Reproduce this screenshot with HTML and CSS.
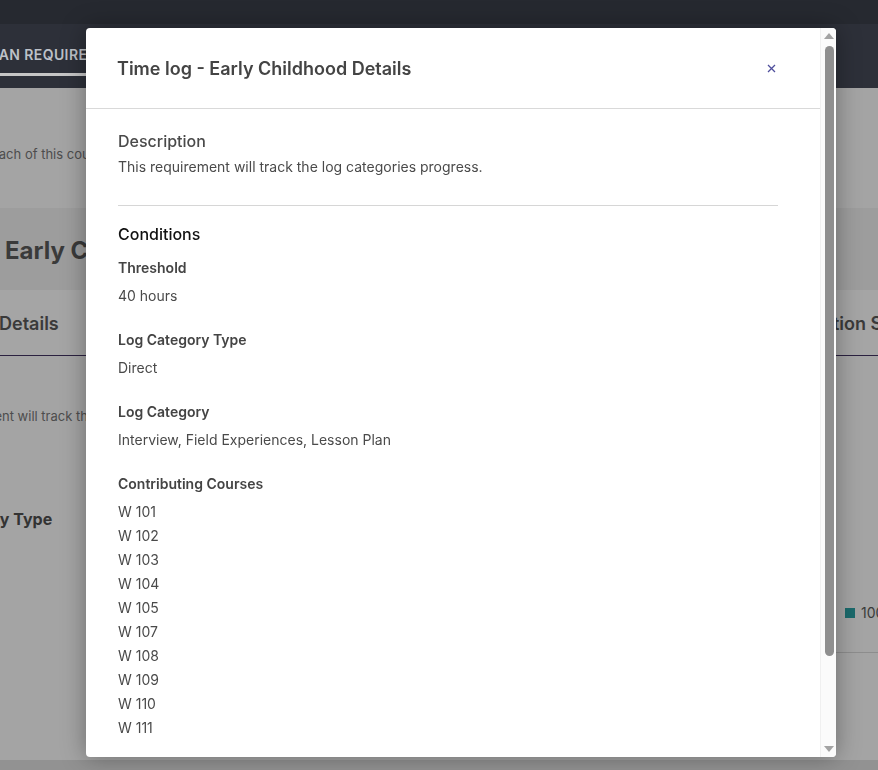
FILE: index.html
```html
<!DOCTYPE html>
<html lang="en">
   <head>
      <title>Time log - Early Childhood Details</title>
      <meta charset="UTF-8">
      <meta name="viewport" content="width=device-width, initial-scale=1.0">
      <link rel="stylesheet" href="styles.css">
   </head>
   <body>
      <div class="page">
         <div class="topbar"></div>
         <nav class="navbar">
            <span class="nav-item">Plan Requirements</span>
         </nav>
         <div class="intro">
            <p class="intro-text">Each of this course requirements</p>
         </div>
         <div class="title-band">
            <h1 class="page-title">Early Childhood</h1>
         </div>
         <div class="tabs">
            <span class="tab tab-left">Details</span>
            <span class="tab tab-right">Completion Status</span>
         </div>
         <div class="columns">
            <div class="col-left">
               <p class="bg-text">This requirement will track the log categories progress.</p>
               <p class="bg-label">Log Category Type</p>
            </div>
            <div class="col-right">
               <div class="legend"><span class="swatch"></span>100%</div>
               <div class="legend-rule"></div>
            </div>
         </div>
         <div class="footer-band"></div>
      </div>

      <div class="modal">
         <div class="modal-main">
            <header class="modal-header">
               <h2 class="modal-title">Time log - Early Childhood Details</h2>
               <button class="modal-close" aria-label="Close">
                  <svg width="9" height="9" viewBox="0 0 9 9">
                     <path d="M1 1 L8 8 M8 1 L1 8" stroke="#4f4f9c" stroke-width="1.3" fill="none"/>
                  </svg>
               </button>
            </header>
            <div class="modal-body">
               <h3 class="section-title">Description</h3>
               <p class="desc">This requirement will track the log categories progress.</p>
               <hr class="rule">
               <h3 class="section-title conditions">Conditions</h3>
               <div class="field">
                  <div class="field-label">Threshold</div>
                  <div class="field-value">40 hours</div>
               </div>
               <div class="field">
                  <div class="field-label">Log Category Type</div>
                  <div class="field-value">Direct</div>
               </div>
               <div class="field">
                  <div class="field-label">Log Category</div>
                  <div class="field-value">Interview, Field Experiences, Lesson Plan</div>
               </div>
               <div class="field">
                  <div class="field-label">Contributing Courses</div>
                  <ul class="courses">
                     <li>W 101</li>
                     <li>W 102</li>
                     <li>W 103</li>
                     <li>W 104</li>
                     <li>W 105</li>
                     <li>W 107</li>
                     <li>W 108</li>
                     <li>W 109</li>
                     <li>W 110</li>
                     <li>W 111</li>
                  </ul>
               </div>
            </div>
         </div>
         <div class="scrollbar">
            <span class="arrow-up"></span>
            <span class="thumb"></span>
            <span class="arrow-down"></span>
         </div>
      </div>
   </body>
</html>
```

FILE: styles.css
```css
*
{ box-sizing:border-box;}
html, body
{ margin:0;
  height:100%;
  overflow:hidden;}
body
{ font-family:Inter, "Noto Sans", sans-serif;
  background-color:#a4a4a4;
  color:#444;}
p, h1, h2, h3, ul
{ margin:0;}

/* dimmed page behind the dialog */
.page
{ width:100%;
  height:770px;
  display:flex;
  flex-direction:column;}
.topbar
{ height:24px;
  background-color:#262930;}
.navbar
{ height:64px;
  background-color:#2d3039;
  display:flex;
  align-items:flex-start;}
.nav-item
{ margin:0 0 0 -19px;
  padding:22px 0 10px 0;
  border-bottom:3px solid #c6c6c6;
  width:130px;
  white-space:nowrap;
  color:#bdc1c8;
  font-size:14px;
  font-weight:600;
  letter-spacing:.4px;
  text-transform:uppercase;}
.intro
{ height:120px;
  padding-top:58px;
  background-color:#a4a4a4;}
.intro-text
{ margin-left:-9px;
  font-size:13px;
  color:#4d4d4d;
  white-space:nowrap;}
.title-band
{ height:82px;
  padding:28px 0 0 5px;
  background-color:#9d9d9d;}
.page-title
{ font-size:24px;
  font-weight:700;
  color:#3a3a3a;
  white-space:nowrap;}
.tabs
{ height:66px;
  display:flex;
  background-color:#a5a5a5;
  border-bottom:1px solid #2b2140;}
.tab
{ padding-top:23px;
  font-size:18px;
  font-weight:600;
  color:#3a3a3a;
  white-space:nowrap;}
.tab-left
{ flex:0 0 767px;
  margin-left:-1px;}
.columns
{ flex:1;
  display:flex;
  background-color:#a4a4a4;}
.col-left
{ flex:0 0 776px;
  padding-top:52px;}
.bg-text
{ margin-left:-90px;
  font-size:13px;
  color:#4d4d4d;
  white-space:nowrap;}
.bg-label
{ margin:85px 0 0 -96px;
  font-size:16px;
  font-weight:700;
  color:#333;
  white-space:nowrap;}
.col-right
{ flex:1;
  padding:248px 0 0 69px;}
.legend
{ display:flex;
  align-items:center;
  gap:6px;
  font-size:14px;
  color:#3a3a3a;
  white-space:nowrap;}
.swatch
{ width:10px;
  height:10px;
  background-color:#1b6a6c;}
.legend-rule
{ margin:31px 0 0 -69px;
  border-top:1px solid #8d8d8d;}
.footer-band
{ height:10px;
  background-color:#929292;}

/* dialog */
.modal
{ position:fixed;
  left:86px;
  top:28px;
  width:750px;
  height:729px;
  display:flex;
  background-color:#fff;
  border-radius:4px;
  overflow:hidden;
  box-shadow:0 0 24px rgba(0, 0, 0, .35);}
.modal-main
{ flex:1;
  min-width:0;}
.modal-header
{ height:81px;
  display:flex;
  align-items:center;
  justify-content:space-between;
  padding:1px 44px 0 31px;
  border-bottom:1px solid #d9d9d9;}
.modal-title
{ font-size:18px;
  font-weight:600;
  color:#444;}
.modal-close
{ border:none;
  background:none;
  padding:0;
  width:9px;
  height:9px;
  display:flex;}
.modal-body
{ padding:20px 42px 0 32px;}
.section-title
{ font-size:16px;
  font-weight:500;
  line-height:24px;
  color:#4a4a4a;}
.section-title.conditions
{ color:#111;}
.desc
{ margin-top:2px;
  font-size:14px;
  line-height:24px;
  color:#4a4a4a;}
.rule
{ margin:26px 0 16px;
  border:none;
  border-top:1px solid #d6d6d6;}
.field
{ margin-top:10px;
  margin-bottom:20px;
  font-size:14px;
  line-height:24px;
  color:#4a4a4a;}
.field + .field
{ margin-top:0;}
.field-label
{ font-weight:600;
  color:#444;
  margin-bottom:4px;}
.courses
{ list-style:none;
  padding:0;}

/* scrollbar drawn at the right edge of the dialog */
.scrollbar
{ flex:0 0 16px;
  display:flex;
  flex-direction:column;
  align-items:center;
  padding:5px 0 5px 1px;
  background-color:#fbfbfb;
  border-left:1px solid #f0f0f0;}
.arrow-up, .arrow-down
{ width:0;
  height:0;
  border-left:5px solid transparent;
  border-right:5px solid transparent;}
.arrow-up
{ border-bottom:6px solid #a3a3a3;}
.arrow-down
{ margin-top:auto;
  border-top:6px solid #a3a3a3;}
.thumb
{ margin-top:7px;
  width:9px;
  height:610px;
  border-radius:5px;
  background-color:#8f8f8f;}
```
